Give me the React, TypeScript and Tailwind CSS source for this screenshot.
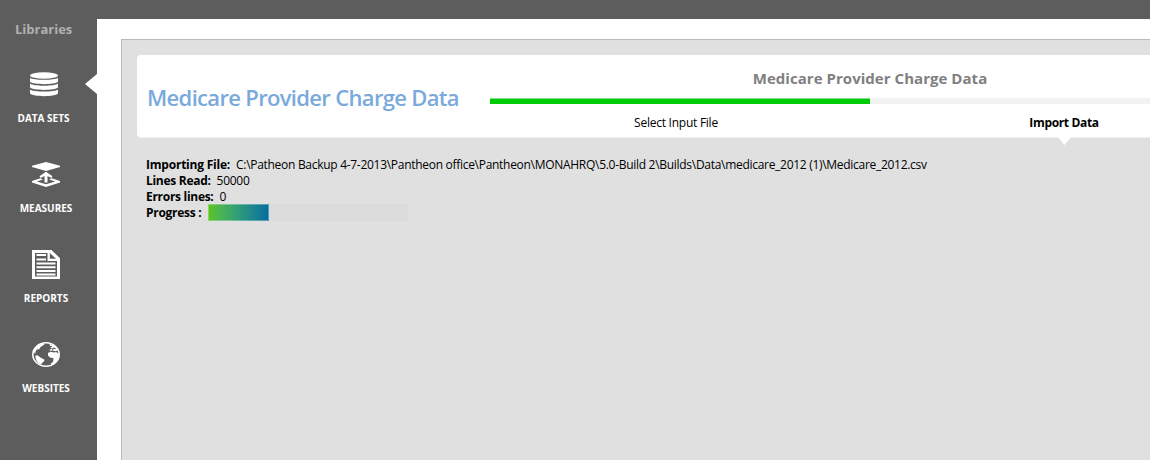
import type { ReactNode } from "react";

function DatabaseIcon() {
  return (
    <svg width="28" height="25" viewBox="0 0 28 25" fill="white">
      <ellipse cx="14" cy="3.5" rx="14" ry="3.3" />
      <path d="M0 5.7C3 8.4 25 8.4 28 5.7V9.8C25 13 3 13 0 9.8Z" />
      <path d="M0 11.5C3 14.4 25 14.4 28 11.5V15.6C25 18.8 3 18.8 0 15.6Z" />
      <path d="M0 17.4C3 20.2 25 20.2 28 17.4V21.5C25 25 3 25 0 21.5Z" />
    </svg>
  );
}

function MeasuresIcon() {
  return (
    <svg width="28" height="25" viewBox="0 0 28 25" fill="white">
      <path d="M14 0L28 3.7V4.9L14 9L0 4.9V3.7Z" />
      <path d="M14 9.7L20.5 14.2L19.3 16L15.5 14V20.5H12.5V14L8.7 16L7.5 14.2Z" />
      <path d="M8.5 16.2L0 19V20.5L14 25L28 20.5V19L19.5 16.2L17.2 17.4L23.2 19.4L14 22.2L4.8 19.4L10.8 17.4Z" fillRule="evenodd" />
    </svg>
  );
}

function ReportIcon() {
  return (
    <svg width="28" height="29" viewBox="0 0 28 29">
      <path d="M0 0H19.5L28 8.2V29H0Z" fill="white" />
      <path d="M3 3H15.5V11H25V26.5H3Z" fill="#5d5d5d" />
      <path d="M17.8 3V8.8H24Z" fill="#5d5d5d" />
      <path d="M4.5 5H14M4.5 9.4H14M4.5 13.5H23.5M4.5 17.3H23.5M4.5 21H23.5M4.5 24.6H23.5" stroke="white" strokeWidth="2" />
    </svg>
  );
}

function GlobeIcon() {
  return (
    <svg width="28" height="25" viewBox="0 0 28 25">
      <ellipse cx="14" cy="12.5" rx="13.2" ry="11.7" fill="#5d5d5d" stroke="white" strokeWidth="1.6" />
      <path d="M1.5 9.5C3 5 6.5 2 11.5 1.2L12.5 2.6L10 4L8.2 5.5L7.2 7.2L4.8 7.6L3.6 9.3L3.2 12Z" fill="white" />
      <path d="M3.2 13.8L5.5 13.2L8.5 15.4L12.6 17.8L11.6 19.8L9.7 21.2L9.3 22.8C6 21.5 3.6 18.2 3.2 13.8Z" fill="white" />
      <path d="M16 11L18.5 9.7L22 10.4L24.2 10L27 12.2C27 17.5 24 21.5 19.5 23.4L18.8 21.8L21.2 19.5L21.5 16.2L18 15.5L16 13.6Z" fill="white" />
      <path d="M17.4 1.7C21 2.6 24.2 4.6 26 8.2L23.6 9.2L20.8 8.5L17.5 8.8L18 7.4L20 6.5L18.5 5.2Z" fill="white" />
      <path d="M20 7.5L21.8 6.2L23.6 6.7M18 4.8L20 4.2" stroke="#5d5d5d" strokeWidth="1.1" fill="none" />
    </svg>
  );
}

function NavItem({ icon, label, selected = false }: { icon: ReactNode; label: string; selected?: boolean }) {
  return (
    <div className={`relative flex h-[90px] flex-col items-center ${selected ? "pr-[10px]" : "pr-[5px]"}`}>
      <div className="flex h-[34px] items-center">{icon}</div>
      <div className="mt-[10px] text-[10px] leading-[14px] font-bold whitespace-nowrap text-white">{label}</div>
      {selected && (
        <svg className="absolute top-[7px] right-0" width="12" height="20" viewBox="0 0 12 20">
          <path d="M12 0V20L0 10Z" fill="white" />
        </svg>
      )}
    </div>
  );
}

export default function App() {
  return (
    <div className="flex h-[460px] w-[1150px] flex-col overflow-hidden bg-[#5d5d5d] font-['Open_Sans','Noto_Sans',sans-serif] text-black">
      <div className="h-[19px] shrink-0" />
      <div className="flex min-h-0 flex-1">
        <nav className="w-[97px] shrink-0">
          <div className="h-[48px] pt-[1px] pl-[15px] text-[13px] leading-[18px] font-bold text-[#b0b0b0]">Libraries</div>
          <NavItem icon={<DatabaseIcon />} label="DATA SETS" selected />
          <NavItem icon={<MeasuresIcon />} label="MEASURES" />
          <NavItem icon={<ReportIcon />} label="REPORTS" />
          <NavItem icon={<GlobeIcon />} label="WEBSITES" />
        </nav>
        <main className="min-w-0 flex-1 bg-white pt-5 pl-6">
          <section className="h-full border-t border-l border-[#b9b9b9] bg-[#e0e0e0] pt-[15px] pl-[15px]">
            <header className="flex h-[83px] rounded-l border-b border-[#eeeeee] bg-white">
              <h1 className="w-[353px] shrink-0 pt-[26px] pl-[10px] text-[22px] leading-[32px] font-semibold tracking-[-0.67px] whitespace-nowrap text-[#7aa9dc]">
                Medicare Provider Charge Data
              </h1>
              <div className="min-w-0 flex-1">
                <h2 className="h-[43px] w-[760px] pt-[13px] text-center text-[15px] leading-[20px] font-bold tracking-[0.04px] text-[#808080]">
                  Medicare Provider Charge Data
                </h2>
                <div className="h-[6px] bg-[#f2f2f2]">
                  <div className="h-full w-[380px] border-t border-[#84df84] bg-[#00cc05]" />
                </div>
                <div className="flex pt-[10px] text-xs leading-[18px] whitespace-nowrap">
                  <div className="w-[372px] shrink-0 text-center tracking-[-0.25px]">Select Input File</div>
                  <div className="relative w-[404px] shrink-0 text-center font-bold tracking-[-0.35px]">
                    Import Data
                    <svg className="absolute top-[23px] left-[196px]" width="13" height="8" viewBox="0 0 13 8">
                      <path d="M0 0H13L6.5 8Z" fill="white" />
                    </svg>
                  </div>
                </div>
              </div>
            </header>
            <div className="pt-[19px] pl-[9px] text-xs leading-4 tracking-[-0.29px] whitespace-nowrap">
              <div className="flex gap-[6px]">
                <b className="tracking-[-0.22px]">Importing File:</b>
                <span>C:\Patheon Backup 4-7-2013\Pantheon office\Pantheon\MONAHRQ\5.0-Build 2\Builds\Data\medicare_2012 (1)\Medicare_2012.csv</span>
              </div>
              <div className="flex gap-[6px]"><b>Lines Read:</b><span>50000</span></div>
              <div className="flex gap-[6px]"><b>Errors lines:</b><span>0</span></div>
              <div className="flex">
                <b className="w-[62px]">Progress :</b>
                <div className="-mt-px h-[17px] w-[200px] bg-[#dcdcdc]">
                  <div className="h-full w-[61px] border border-white/30 bg-linear-to-r from-[#5cc516] to-[#086da0] bg-origin-border" />
                </div>
              </div>
            </div>
          </section>
        </main>
      </div>
    </div>
  );
}
